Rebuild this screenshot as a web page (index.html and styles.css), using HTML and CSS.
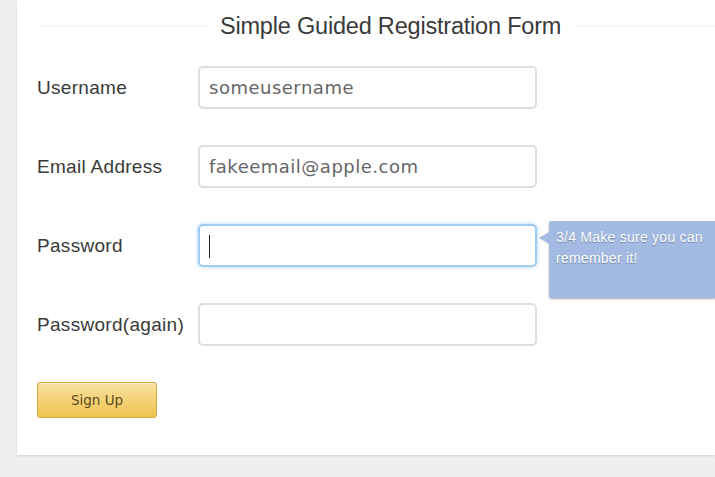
FILE: index.html
```html
<!DOCTYPE html>
<html>
<head>
<meta charset="utf-8">
<title>Simple Guided Registration Form</title>
<link rel="stylesheet" href="styles.css">
</head>
<body>
<div class="panel">
  <div class="title-row">
    <span class="rule rule-left"></span>
    <h1 class="title">Simple Guided Registration Form</h1>
    <span class="rule"></span>
  </div>
  <form class="form">
    <div class="row">
      <label class="label">Username</label>
      <div class="field"><input class="input" type="text" value="someusername"></div>
    </div>
    <div class="row">
      <label class="label">Email Address</label>
      <div class="field"><input class="input" type="text" value="fakeemail@apple.com"></div>
    </div>
    <div class="row">
      <label class="label">Password</label>
      <div class="field">
        <div class="input focused"><span class="caret"></span></div>
        <div class="tip">3/4 Make sure you can remember it!</div>
      </div>
    </div>
    <div class="row">
      <label class="label">Password(again)</label>
      <div class="field"><input class="input" type="password" value=""></div>
    </div>
    <div class="actions">
      <button class="btn" type="button">Sign Up</button>
    </div>
  </form>
</div>
</body>
</html>
```
FILE: styles.css
```css
html, body {
  margin: 0;
  padding: 0;
}
body {
  background: #efefef;
  overflow: hidden;
  width: 715px;
  height: 477px;
  font-family: "Liberation Sans", Arial, sans-serif;
}
.panel {
  margin-left: 17px;
  width: 698px;
  box-sizing: border-box;
  padding: 0 0 37px 20px;
  background: #fff;
  box-shadow: 0 1px 2px rgba(0,0,0,0.12);
}
.title-row {
  display: flex;
  align-items: center;
  height: 52px;
}
.rule {
  flex: 1;
  height: 1px;
  background: #efefef;
}
.rule-left {
  flex: none;
  width: 171px;
}
.title {
  margin: 0 12px;
  font-weight: normal;
  font-size: 23.5px;
  color: #3a3a3a;
  letter-spacing: -0.2px;
  line-height: 30px;
}
.form {
  margin-top: 14px;
  display: flex;
  flex-direction: column;
  gap: 36px;
}
.row {
  display: flex;
  align-items: center;
  height: 43px;
}
.label {
  width: 161px;
  font-size: 19px;
  color: #3a3a3a;
  letter-spacing: 0.3px;
}
.field {
  position: relative;
}
.input {
  display: block;
  box-sizing: border-box;
  width: 339px;
  height: 43px;
  margin: 0;
  border: 2px solid #dedede;
  border-radius: 5px;
  padding: 0 9px;
  font-family: "DejaVu Sans", sans-serif;
  font-size: 18px;
  letter-spacing: 0.5px;
  color: #666;
  background: #fff;
  outline: none;
}
.focused {
  border-color: #9ecbf1;
  box-shadow: 0 0 4px rgba(110, 175, 235, 0.55);
  position: relative;
}
.caret {
  position: absolute;
  left: 9px;
  top: 9px;
  width: 1px;
  height: 23px;
  background: #222;
}
.tip {
  position: absolute;
  left: 351px;
  top: -3px;
  width: 166px;
  height: 77px;
  box-sizing: border-box;
  padding: 6px 2px 6px 7px;
  background: #a3bbe3;
  border-radius: 2px 0 0 2px;
  box-shadow: 0 1px 2px rgba(0,0,0,0.35);
  color: #fff;
  font-size: 14px;
  letter-spacing: 0.25px;
  line-height: 21px;
  text-shadow: 0 1px 1px rgba(0,0,0,0.3);
}
.tip::before {
  content: "";
  position: absolute;
  left: -10px;
  top: 11px;
  border-style: solid;
  border-width: 6px 10px 6px 0;
  border-color: transparent #a3bbe3 transparent transparent;
}
.actions {
  margin-top: 0;
}
.btn {
  display: block;
  width: 120px;
  height: 36px;
  margin: 0;
  padding: 0;
  border: 1px solid #d3a944;
  border-radius: 3px;
  background: linear-gradient(#f8e0a0, #f0c34e);
  box-shadow: inset 0 1px 0 rgba(255,255,255,0.4);
  font-family: "DejaVu Sans", sans-serif;
  font-size: 13.5px;
  color: #5b4a24;
  cursor: pointer;
}
```
